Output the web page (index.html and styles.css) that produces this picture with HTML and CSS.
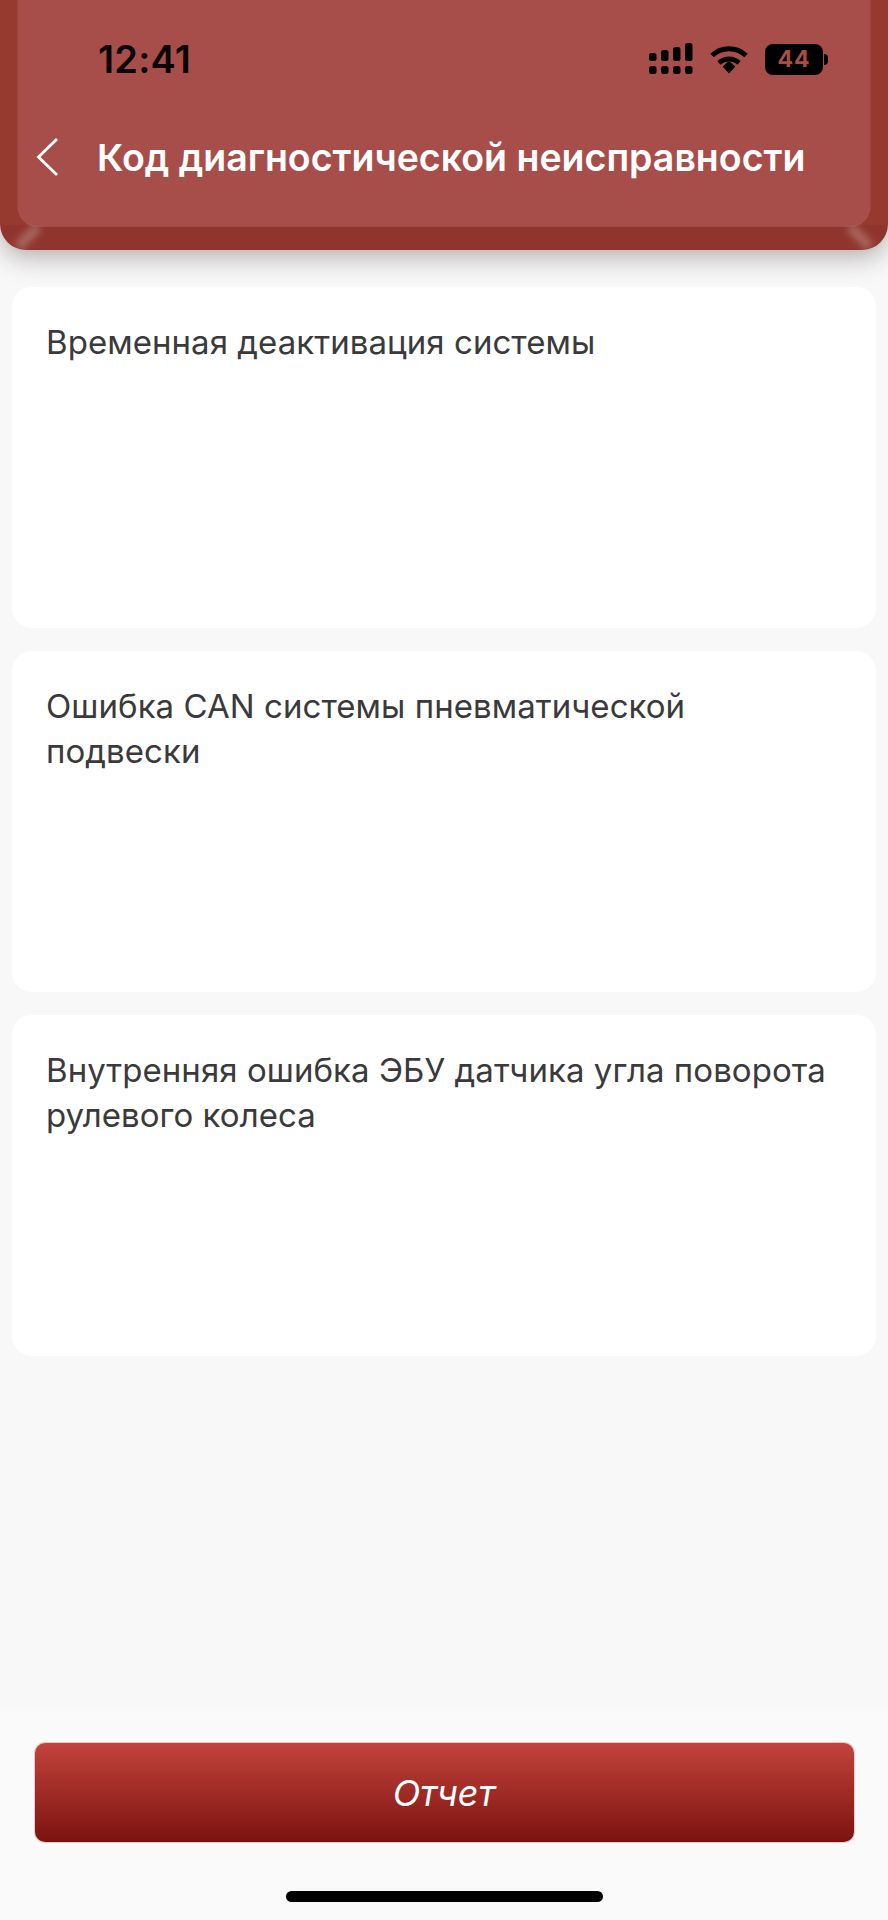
FILE: index.html
```html
<!DOCTYPE html>
<html lang="ru">
<head>
<meta charset="utf-8">
<title>Код диагностической неисправности</title>
<link rel="stylesheet" href="styles.css">
</head>
<body>
<div class="screen">
  <header class="header">
    <span class="bevel bevel-left"></span>
    <span class="bevel bevel-right"></span>
    <div class="header-panel">
      <div class="status-bar">
        <span class="time">12:41</span>
        <div class="status-icons">
          <svg class="signal" width="44" height="32" viewBox="0 0 44 32" fill="#000">
            <rect x="0" y="10" width="7.5" height="8" rx="2.5"/>
            <rect x="12" y="7" width="7.5" height="11" rx="2.5"/>
            <rect x="24" y="4" width="7.5" height="14" rx="2.5"/>
            <rect x="36" y="0" width="7.5" height="18" rx="2.5"/>
            <rect x="0" y="23" width="7.5" height="8" rx="2.5"/>
            <rect x="12" y="23" width="7.5" height="8" rx="2.5"/>
            <rect x="24" y="23" width="7.5" height="8" rx="2.5"/>
            <rect x="36" y="23" width="7.5" height="8" rx="2.5"/>
          </svg>
          <svg class="wifi" width="38" height="29" viewBox="0 0 38 29" fill="none" stroke="#000" stroke-width="5">
            <path d="M2 10.5C11.5 1.5 26.5 1.5 36 10.5"/>
            <path d="M9 18C14.8 12.8 23.2 12.8 29 18"/>
            <path d="M12.6 21.6L19 15.8L25.4 21.6L19 28.5Z" fill="#000" stroke="none"/>
          </svg>
          <div class="battery"><span class="battery-level">44</span></div>
          <span class="battery-tip"></span>
        </div>
      </div>
      <div class="nav-bar">
        <svg class="back" width="22" height="40" viewBox="0 0 22 40" fill="none" stroke="#fff" stroke-width="2.8">
          <path d="M21 2L2.5 20L21 38"/>
        </svg>
        <h1 class="title">Код диагностической неисправности</h1>
      </div>
    </div>
  </header>
  <main class="list">
    <section class="card">Временная деактивация системы</section>
    <section class="card">Ошибка CAN системы пневматической подвески</section>
    <section class="card">Внутренняя ошибка ЭБУ датчика угла поворота рулевого колеса</section>
  </main>
  <footer class="footer">
    <button class="report" type="button">Отчет</button>
    <span class="home-bar"></span>
  </footer>
</div>
</body>
</html>
```
FILE: styles.css
```css
* { box-sizing: border-box; }
html, body { margin: 0; padding: 0; }
body { background: #f8f8f8; font-family: Inter, "Liberation Sans", sans-serif; }

.screen { width: 888px; height: 1920px; display: flex; flex-direction: column; overflow: hidden; }

.header {
  position: relative;
  flex: none;
  height: 250px;
  padding: 0 18px 24px;
  background: linear-gradient(180deg, #96392f 0%, #96392f 90%, #8f352d 90%, #8f352d 100%);
  border-radius: 0 0 26px 26px;
  box-shadow: 0 8px 24px rgba(60, 40, 40, 0.34);
  overflow: hidden;
  z-index: 1;
}
.bevel {
  position: absolute;
  bottom: -1px;
  width: 10px;
  height: 28px;
  background: rgba(255, 255, 255, .24);
  filter: blur(3.5px);
}
.bevel-left { left: 23px; transform: rotate(45deg); }
.bevel-right { right: 23px; transform: rotate(-45deg); }

.header-panel {
  position: relative;
  height: 226px;
  padding: 0 0 0 18px;
  background: #a84e4a;
  border-radius: 0 0 20px 20px;
  box-shadow: 0 1px 0 rgba(255,255,255,.12), 1px 0 0 rgba(255,255,255,.06), -1px 0 0 rgba(255,255,255,.06);
}

.status-bar { display: flex; justify-content: space-between; align-items: center; height: 118px; padding: 0 42px 0 62px; }
.time { font-size: 38px; font-weight: 600; color: #0a0505; line-height: 1; letter-spacing: .2px; }
.status-icons { display: flex; align-items: center; }
.signal { margin-right: 17px; }
.wifi { margin-right: 17px; }
.battery {
  width: 58px; height: 31px; border-radius: 8px; background: #000;
  display: flex; align-items: center; justify-content: center;
}
.battery-level { font-size: 23px; font-weight: 700; color: #a84e4a; letter-spacing: 1px; line-height: 1; }
.battery-tip { width: 4px; height: 11px; background: #000; border-radius: 0 4px 4px 0; margin-left: 1px; }

.nav-bar { display: flex; align-items: center; height: 60px; margin-top: 9px; }
.back { flex: none; }
.title { margin: 0 0 0 39px; font-size: 37.5px; font-weight: 600; color: #fff; white-space: nowrap; line-height: 1.2; }

.list { flex: 1; display: flex; flex-direction: column; gap: 23px; padding: 37px 12px 0; }
.card {
  height: 341px; padding: 33px 34px 0;
  background: #fff; border-radius: 20px;
  font-size: 33px; letter-spacing: .05px; line-height: 45px; color: #3a3a3c;
}

.footer { flex: none; height: 212px; background: #fafafb; display: flex; flex-direction: column; align-items: center; padding-top: 35px; }
.report {
  width: 819px; height: 99px; border: 0; border-radius: 10px;
  background: linear-gradient(180deg, #c3433c 0%, #7c130f 100%);
  box-shadow: 0 0 0 1px rgba(150,60,60,.25);
  font-family: Inter, "Liberation Sans", sans-serif;
  font-style: italic; font-size: 36px; color: #fff;
}
.home-bar { width: 317px; height: 11px; margin-top: 49px; border-radius: 6px; background: #000; }
```
